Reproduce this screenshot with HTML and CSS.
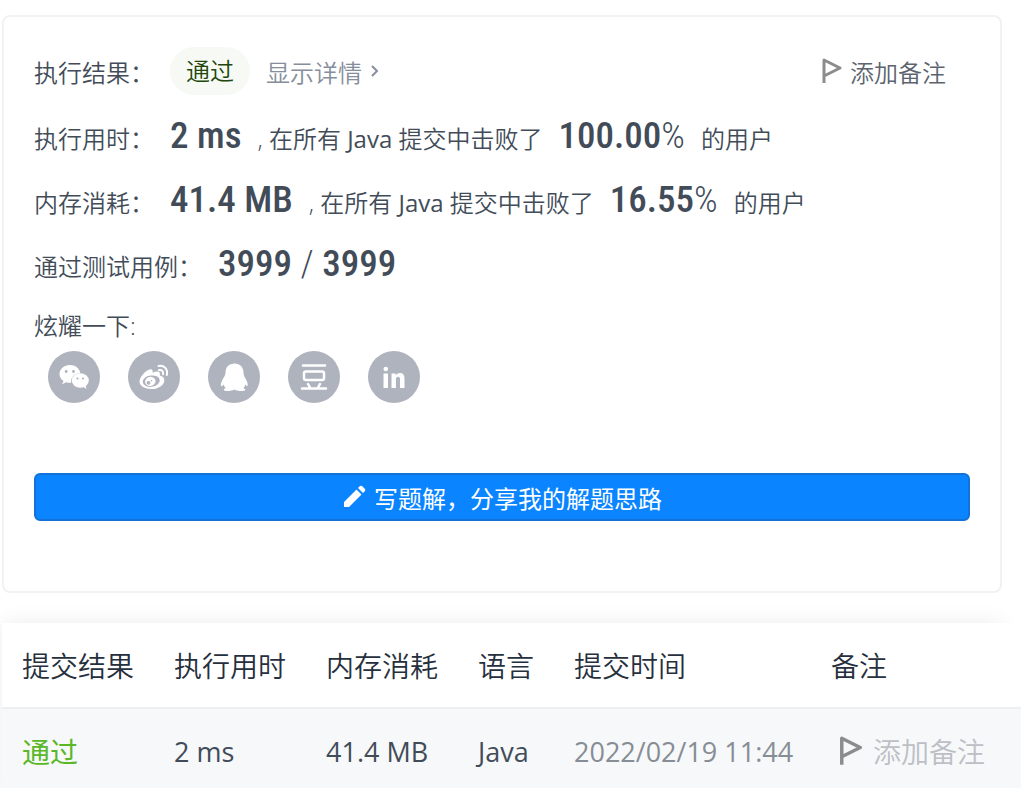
FILE: index.html
```html
<!DOCTYPE html>
<html lang="zh-CN">
<head>
  <meta charset="UTF-8">
  <title>提交记录</title>
  <link rel="stylesheet" href="styles.css">
</head>
<body>
<main class="page">
  <section class="result-card">
    <div class="result-header">
      <span class="label">执行结果：</span>
      <span class="status">通过</span>
      <a class="detail-link" href="#">显示详情
        <svg class="chevron" viewBox="0 0 10 14"><path d="M2 2l5 5-5 5"/></svg>
      </a>
      <button class="note-btn" type="button">
        <svg class="flag" viewBox="0 0 20 26"><path d="M2 25V2L18 10 2 18"/></svg>
        添加备注
      </button>
    </div>

    <p class="stat">执行用时：<strong>2 ms</strong>, 在所有 <span class="lang">Java</span> 提交中击败了<strong>100.00<span class="thin">%</span></strong>的用户</p>
    <p class="stat">内存消耗：<strong>41.4 MB</strong>, 在所有 <span class="lang">Java</span> 提交中击败了<strong>16.55<span class="thin">%</span></strong>的用户</p>
    <p class="stat">通过测试用例：<strong>3999 <span class="thin">/</span> 3999</strong></p>

    <p class="share-title">炫耀一下:</p>
    <div class="share-list">
      <button class="share-btn" type="button" aria-label="微信">
        <svg viewBox="0 0 52 52">
          <path class="fill" d="M22 14c-6 0-10.500 4-10.500 9 0 3 1.500 5.300 4 6.900l-1.300 3.400 4-2.100c1.200.4 2.500.6 4 .6h1c-.8-5.500 3.500-9.800 9.200-9.600C31.500 17.500 27.500 14 22 14z"/>
          <ellipse class="fill" cx="32.300" cy="29.500" rx="8.500" ry="7.300"/>
          <path class="fill" d="M34 35l4.500 3-1.200-4.500z"/>
          <circle class="hole" cx="18.200" cy="20.500" r="1.400"/>
          <circle class="hole" cx="25.500" cy="20.500" r="1.400"/>
          <circle class="hole" cx="29.500" cy="27.500" r="1.100"/>
          <circle class="hole" cx="35" cy="27.500" r="1.100"/>
        </svg>
      </button>
      <button class="share-btn" type="button" aria-label="微博">
        <svg viewBox="0 0 52 52">
          <path class="fill" d="M21.500 18.500c2.400-1 3.800.4 3 3.200 2.800-1.300 6.500-1.800 7.300.2.400 1 .2 1.700-.1 2.700 3 .8 4.600 2.300 4.600 4.800 0 4.700-6 8.600-12.800 8.600-6.700 0-12-3-12-7.500 0-4 5-10.200 10-12z"/>
          <ellipse class="hole" cx="23.200" cy="30.200" rx="8.600" ry="5.700" transform="rotate(-8 23 30)"/>
          <ellipse class="fill" cx="22.200" cy="30.500" rx="5.300" ry="4.500" transform="rotate(-15 22 30)"/>
          <circle class="hole" cx="20.500" cy="31.800" r="1.900"/>
          <circle class="hole" cx="23.500" cy="29.800" r=".8"/>
          <path class="line wave" d="M30.500 15c5.500-1.200 9.800 3.300 8.300 9"/>
          <path class="line wave" d="M31 19c3-.5 4.700 1.500 4 4.200"/>
        </svg>
      </button>
      <button class="share-btn" type="button" aria-label="QQ">
        <svg viewBox="0 0 52 52">
          <path class="fill" d="M26.500 12.500c-5.500 0-9 3.700-9 9.200 0 1.200-.3 2.300-1 3.500-2 3.500-4.200 7-3.500 9.600.4.900 1.800-.1 2.600-1.300.4 1.500 1.100 2.700 2.200 3.700-1.400.4-2 .9-2 1.500 0 1.800 7.500 1.700 10.500-.2 3 1.900 11 2 11 .2 0-.7-.8-1.100-2-1.500 1-1 1.700-2.200 2.100-3.700.8 1.200 1.800 2.100 2.200 1.300.7-2.600-1.600-6.200-3.300-9.600-.6-1.200-.8-2.300-.8-3.500 0-5.500-3.500-9.200-9-9.200z"/>
        </svg>
      </button>
      <button class="share-btn" type="button" aria-label="豆瓣">
        <svg viewBox="0 0 52 52">
          <path class="line" d="M15 14.500h22M14 37.500h24M20 33l2 3.500M32 33l-2 3.500"/>
          <rect class="line" x="16" y="20.500" width="20" height="8.500" rx="2"/>
        </svg>
      </button>
      <button class="share-btn" type="button" aria-label="LinkedIn">
        <svg viewBox="0 0 52 52">
          <circle class="fill" cx="17.800" cy="18" r="2.300"/>
          <path class="fill" d="M15.500 22.500h4.500V37h-4.500zM23.500 22.500h4.200v2c1-1.700 2.600-2.500 4.400-2.500 3 0 4.400 2 4.400 5.500V37H32v-8.700c0-1.800-.6-2.600-1.900-2.600-1.400 0-2.200 1-2.200 2.700V37h-4.400z"/>
        </svg>
      </button>
    </div>

    <button class="write-btn" type="button">
      <svg class="pencil" viewBox="0 0 24 24"><path d="M2 22v-5L14.500 4.500l5 5L7 22zM16 3l2-2q1-.7 2 0l3 3q.7 1 0 2l-2 2z"/></svg>
      写题解，分享我的解题思路
    </button>
  </section>

  <section class="history">
    <table>
      <thead>
        <tr>
          <th class="col">提交结果</th>
          <th class="col">执行用时</th>
          <th class="col">内存消耗</th>
          <th class="col-lang">语言</th>
          <th class="col-time">提交时间</th>
          <th>备注</th>
        </tr>
      </thead>
      <tbody>
        <tr>
          <td><a class="pass" href="#">通过</a></td>
          <td>2 ms</td>
          <td>41.4 MB</td>
          <td>Java</td>
          <td class="time">2022/02/19 11:44</td>
          <td>
            <button class="row-note" type="button">
              <svg class="flag" viewBox="0 0 20 26"><path d="M2 25V2L18 10 2 18"/></svg>
              添加备注
            </button>
          </td>
        </tr>
      </tbody>
    </table>
  </section>
</main>
</body>
</html>
```
FILE: styles.css
```css
* {
  box-sizing: border-box;
}
body {
  margin: 0;
  overflow: hidden;
  background: #fff;
  color: #424c59;
  font-family: "Open Sans", "Noto Sans CJK SC", sans-serif;
  font-size: 24px;
  font-weight: 350;
}
p {
  margin: 0;
}
button {
  border: none;
  padding: 0;
  background: transparent;
  color: inherit;
  font: inherit;
  cursor: pointer;
}
a {
  color: inherit;
  text-decoration: none;
}
svg {
  fill: none;
}
.page {
  padding: 15px 19px 0 2px;
}
.result-card {
  padding: 24px 30px 70px;
  border: 2px solid #f2f2f2;
  border-radius: 8px;
}
.result-header {
  display: flex;
  align-items: center;
  height: 60px;
  margin-bottom: 3px;
}
.status {
  margin: 0 16px;
  padding: 0 16px;
  border-radius: 24px;
  background: #f7faf4;
  color: #20460c;
  line-height: 48px;
}
.detail-link {
  display: flex;
  align-items: center;
  gap: 8px;
  color: #868d9b;
}
.chevron {
  width: 10px;
  height: 14px;
  stroke: #868d9b;
  stroke-width: 2;
}
.note-btn, .row-note {
  display: flex;
  align-items: center;
}
.note-btn {
  gap: 8px;
  margin-left: auto;
  padding-right: 24px;
  color: #5c6470;
}
.flag {
  width: 20px;
  height: 26px;
  stroke: #8c8c8c;
  stroke-width: 3;
  stroke-linejoin: round;
}
.stat {
  height: 64px;
  line-height: 64px;
  white-space: nowrap;
}
.stat strong {
  margin: 0 16px;
  font-family: "Roboto Condensed", Roboto, sans-serif;
  font-size: 37px;
  font-weight: 500;
}
.stat .thin {
  font-weight: 300;
}
.stat .lang {
  font-weight: 400;
}
.share-title {
  margin-top: 14px;
  line-height: 32px;
}
.share-list {
  display: flex;
  gap: 28px;
  margin: 9px 14px 70px;
}
.share-btn {
  width: 52px;
  height: 52px;
  border-radius: 50%;
  background: #aeb3bd;
}
.share-btn svg {
  display: block;
}
.share-btn .fill {
  fill: #fff;
}
.share-btn .hole {
  fill: #aeb3bd;
}
.share-btn .line {
  stroke: #fff;
  stroke-width: 2.5;
  stroke-linecap: round;
}
.share-btn .wave {
  stroke-width: 2;
}
.write-btn {
  display: flex;
  align-items: center;
  justify-content: center;
  gap: 8px;
  width: 100%;
  height: 48px;
  border: 2px solid #1272d8;
  border-radius: 6px;
  background: #0a84ff;
  color: #fff;
  font-weight: 400;
}
.pencil {
  width: 24px;
  height: 24px;
  fill: #fff;
}
.history {
  margin-top: 30px;
  box-shadow: 0 0 20px rgba(0, 0, 0, 0.08);
}
table {
  width: calc(100% + 19px);
  border-collapse: collapse;
  table-layout: fixed;
  background: #fff;
  font-size: 27px;
  white-space: nowrap;
}
th, td {
  height: 85px;
  padding: 0 20px;
  text-align: left;
}
th {
  border-bottom: 2px solid #eeeff0;
  color: #262f3d;
  font-size: 28px;
  font-weight: inherit;
}
td {
  background: #f7f8fa;
  font-weight: 400;
}
.col {
  width: 152px;
}
.col-lang {
  width: 96px;
}
.col-time {
  width: 257px;
}
.pass {
  color: #5ab726;
  font-size: 28px;
}
.time {
  color: #868d95;
}
.row-note {
  gap: 10px;
  padding-left: 8px;
  color: #bcbfc5;
  font-size: 28px;
  font-weight: 350;
}
.row-note .flag {
  width: 24px;
  height: 30px;
}
```
